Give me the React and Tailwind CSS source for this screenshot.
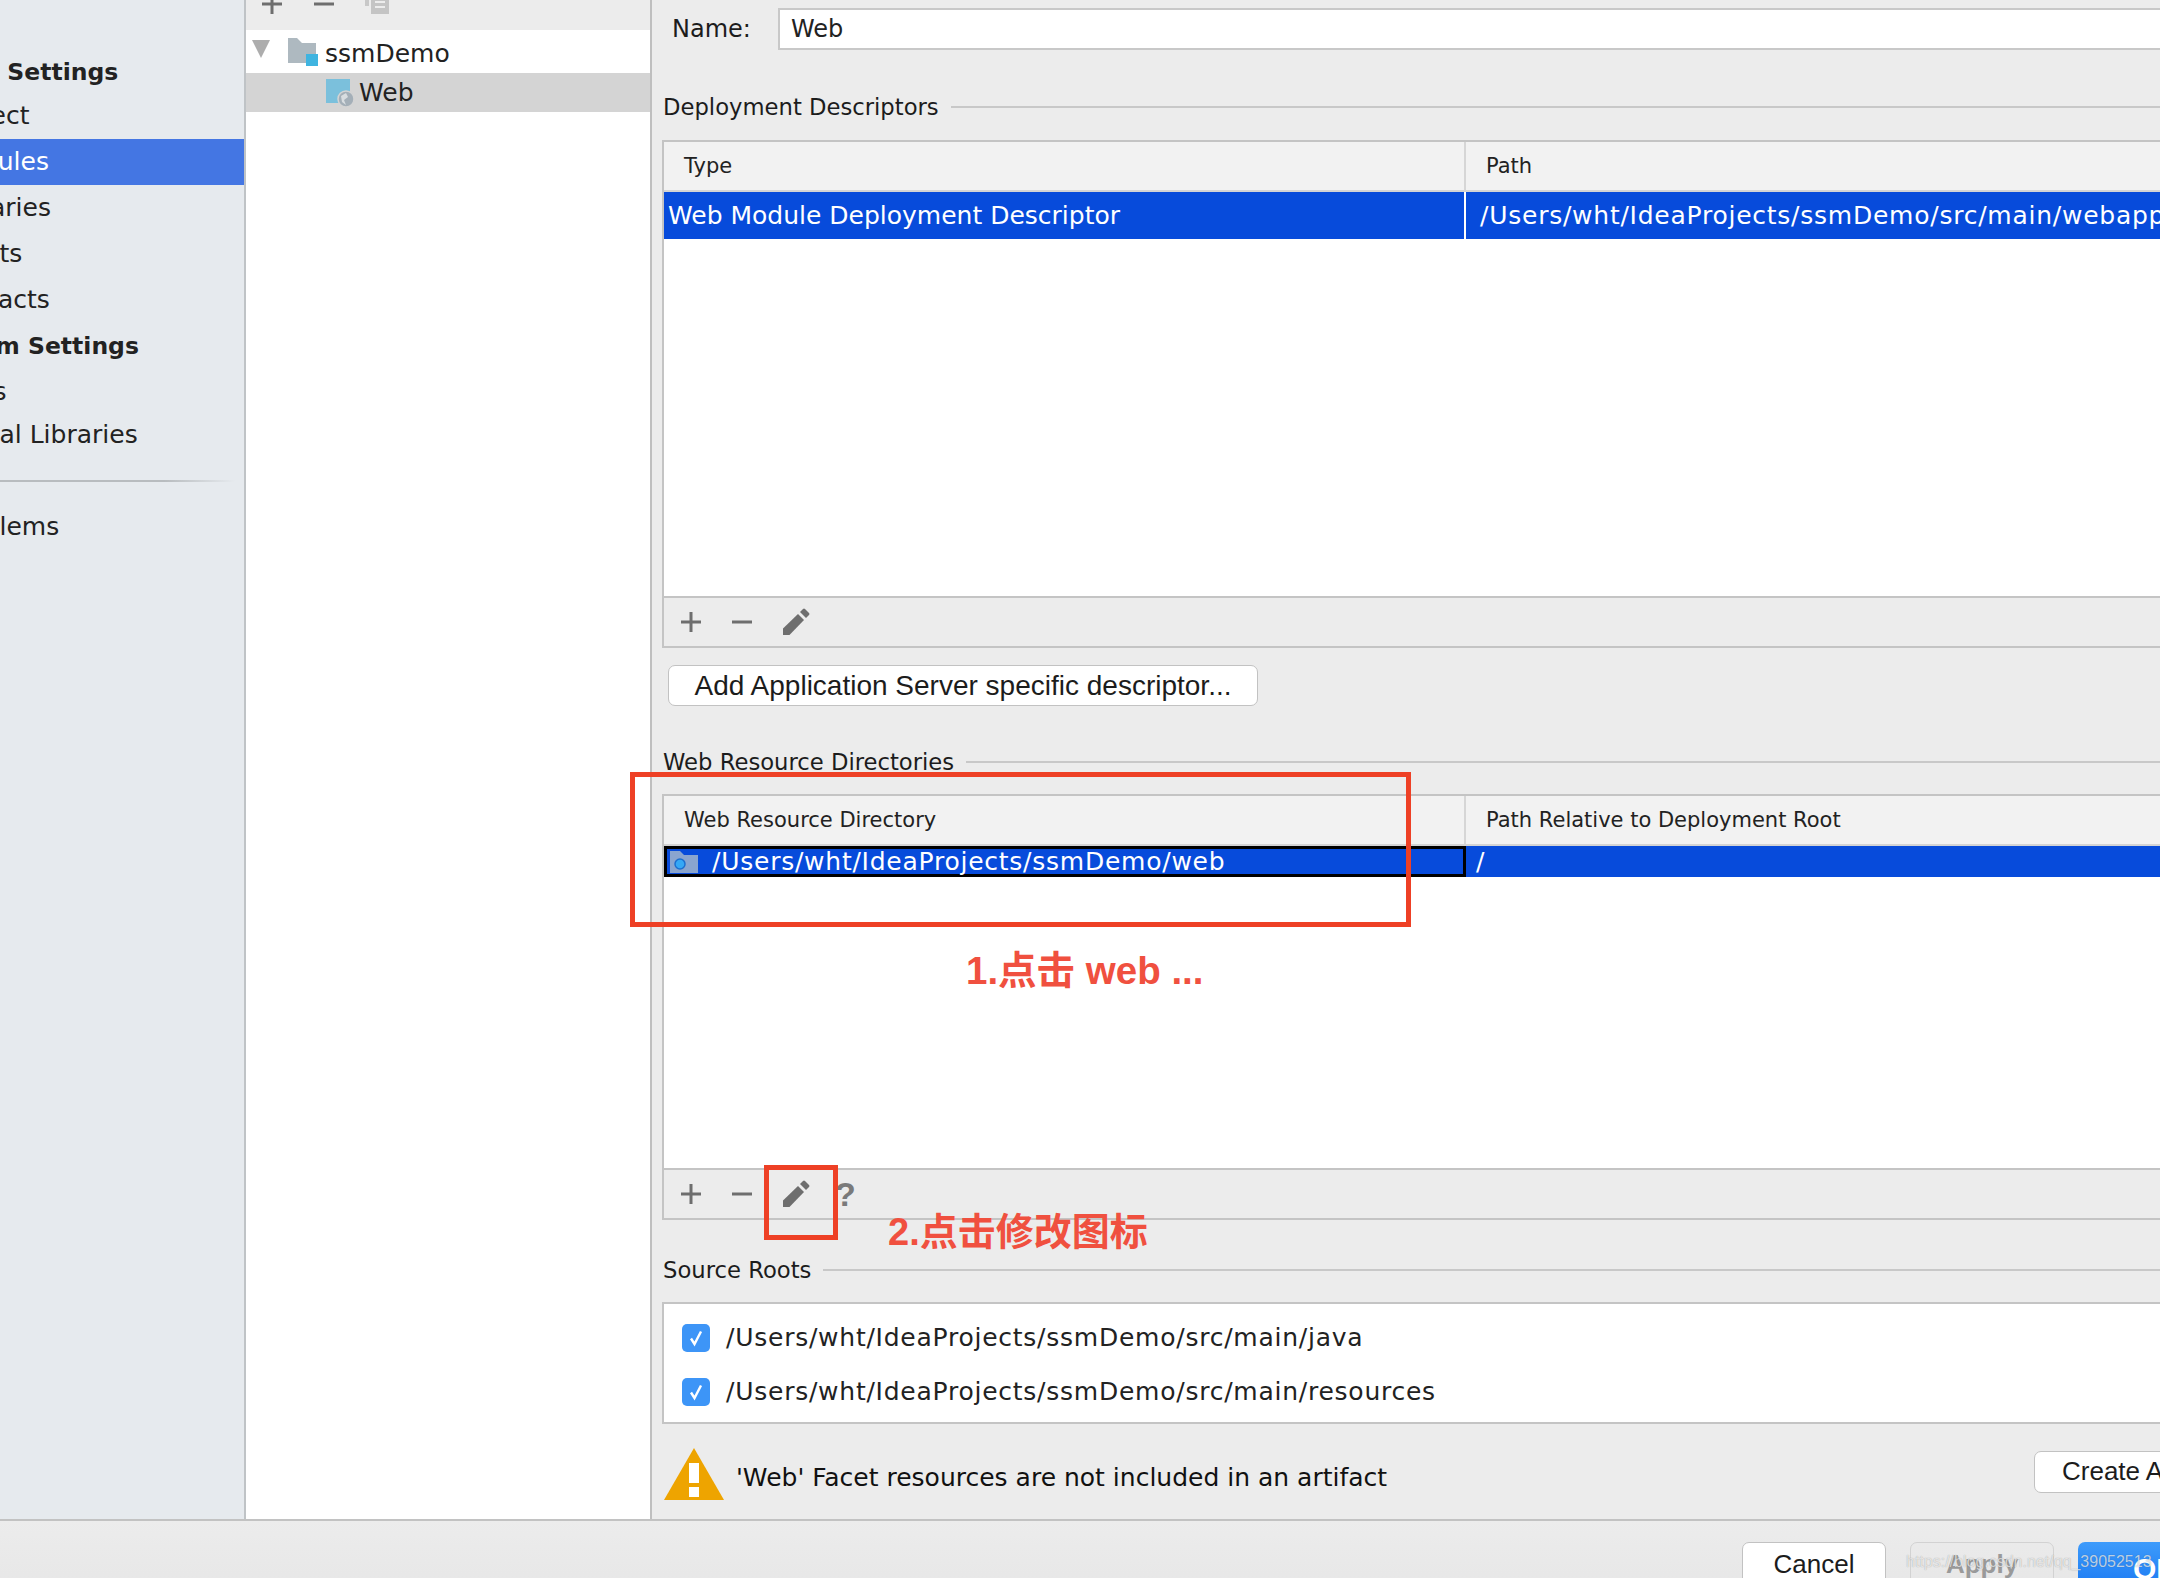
import { useState } from 'react';

const uiFont = "font-['DejaVu_Sans',sans-serif]";

const sidebarItems = [
    { label: 'Project Settings', h: 'h-[41px]', offset: 'ml-[-95px]', bold: true },
    { label: 'Project', h: 'h-[46px]', offset: 'ml-[-56px]' },
    { label: 'Modules', h: 'h-[46px]', offset: 'ml-[-55px]', active: true },
    { label: 'Libraries', h: 'h-[46px]', offset: 'ml-[-57px]' },
    { label: 'Facets', h: 'h-[46px]', offset: 'ml-[-57px]' },
    { label: 'Artifacts', h: 'h-[46px]', offset: 'ml-[-55px]' },
    { label: 'Platform Settings', h: 'h-[47px]', offset: 'ml-[-95px]', bold: true },
    { label: 'SDKs', h: 'h-[43px]', offset: 'ml-[-58px]' },
    { label: 'Global Libraries', h: 'h-[44px]', offset: 'ml-[-58px]' },
];

const PlusIcon = () => (
    <svg width="22" height="22" viewBox="0 0 22 22" className="text-[#6e6e6e]">
        <path d="M9.5 1h3v8.500h8.500v3h-8.500v8.500h-3v-8.500h-8.500v-3h8.500z" fill="currentColor" />
    </svg>
);

const MinusIcon = () => (
    <svg width="22" height="22" viewBox="0 0 22 22" className="text-[#6e6e6e]">
        <rect x="1" y="9.500" width="20" height="3" fill="currentColor" />
    </svg>
);

const PencilIcon = () => (
    <svg width="28" height="28" viewBox="0 0 28 28" className="text-[#6e6e6e]">
        <path d="M1 20.500 L16 6 L22 12 L7.500 27 L1 27 Z" fill="currentColor" />
        <path d="M18 4 L21 1 Q22 0 23 1 L27 5 Q28 6 27 7 L24 10 Z" fill="currentColor" />
    </svg>
);

const CopyIcon = () => (
    <svg width="24" height="24" viewBox="0 0 24 24">
        <rect x="0" y="0" width="4" height="14" fill="#c8c8c8" />
        <rect x="6" y="0" width="18" height="22" fill="#c4c4c4" />
        <path d="M10 5h10M10 10h10M10 15h10" stroke="#ececec" strokeWidth="2" />
    </svg>
);

const Heading = ({ title, className = '' }) => (
    <div className={`flex items-center gap-[12px] pl-[11px] h-[32px] ${className}`}>
        <span className="text-[22.7px] text-[#1c1c1c] whitespace-nowrap">{title}</span>
        <div className="flex-1 h-[2px] bg-[#c8c8c8]" />
    </div>
);

const TableHeader = ({ first, second }) => (
    <div className="flex h-[50px] bg-[#f2f2f2] border-b-2 border-[#d4d4d4] text-[21px] text-[#222]">
        <div className="w-[802px] shrink-0 pl-[20px] pt-[2px] flex items-center border-r-2 border-[#d6d6d6]">{first}</div>
        <div className="flex-1 pl-[20px] pt-[2px] flex items-center">{second}</div>
    </div>
);

const Toolbar = ({ help }) => (
    <div className="flex items-center h-[50px] bg-[#ececec] border-t-2 border-[#c4c4c4] pl-[16px]">
        <PlusIcon />
        <div className="ml-[29px]"><MinusIcon /></div>
        <div className="ml-[29px]"><PencilIcon /></div>
        {help && <span className="ml-[25px] text-[34px] font-bold leading-none text-[#7a7a7a] font-['Liberation_Sans',sans-serif]">?</span>}
    </div>
);

const MacButton = ({ children, className = '' }) => (
    <button className={`flex items-center justify-center rounded-[7px] border border-[#c2c2c2] bg-white text-[#1c1c1c] font-['Liberation_Sans',sans-serif] ${className}`}>
        {children}
    </button>
);

const SourceRoot = ({ path }) => (
    <div className="flex items-center h-[54px] pl-[18px] gap-[16px]">
        <div className="w-[28px] h-[28px] rounded-[5px] bg-[#3d95f7] flex items-center justify-center shrink-0">
            <svg width="18" height="18" viewBox="0 0 18 18" fill="none">
                <path d="M4 9.500 L7.500 15 L14 2.500" stroke="white" strokeWidth="2.400" />
            </svg>
        </div>
        <span className="text-[25px] tracking-[0.75px] text-[#222] whitespace-nowrap">{path}</span>
    </div>
);

const App = () => {
    const [name, setName] = useState('Web');

    return (
        <div className={`relative w-[2160px] h-[1578px] overflow-hidden flex flex-col bg-[#ececec] ${uiFont}`}>
            <div className="flex h-[1521px] border-b-2 border-[#c2c2c2] shrink-0">
                {/* settings sidebar, scrolled off to the left */}
                <div className="w-[246px] shrink-0 bg-[#e6eaee] border-r-2 border-[#bfc3c6] overflow-hidden pt-[52px]">
                    {sidebarItems.map((item) => (
                        <div
                            key={item.label}
                            className={`${item.h} flex items-center whitespace-nowrap ${item.active ? 'bg-[#4476e3] text-white' : 'text-[#222]'} ${item.bold ? 'font-bold text-[23.5px]' : 'text-[25px]'}`}
                        >
                            <span className={item.offset}>{item.label}</span>
                        </div>
                    ))}
                    <div className="mt-[23px] h-[2px] w-[235px] bg-gradient-to-r from-[#b8bcbf] from-70% to-transparent" />
                    <div className="mt-[22px] h-[46px] flex items-center whitespace-nowrap text-[25px] text-[#222]">
                        <span className="ml-[-56px]">Problems</span>
                    </div>
                </div>

                {/* module tree */}
                <div className="w-[406px] shrink-0 bg-white border-r-2 border-[#bfbfbf] flex flex-col">
                    <div className="h-[30px] bg-[#ececec] flex items-center pl-[15px] overflow-hidden">
                        <div className="flex items-center gap-[30px] mt-[-22px]">
                            <PlusIcon />
                            <MinusIcon />
                            <CopyIcon />
                        </div>
                    </div>
                    <div className="h-[43px] flex items-center pl-[6px]">
                        <svg width="18" height="18" viewBox="0 0 18 18" className="mb-[6px]">
                            <path d="M0 0 H18 L9 18 Z" fill="#adadad" />
                        </svg>
                        <svg width="30" height="28" viewBox="0 0 30 28" className="ml-[18px]">
                            <path d="M0 0 H9 L14 5 H28 V25 H0 Z" fill="#aeb9c0" />
                            <rect x="18" y="16" width="12" height="12" fill="#3fb4e0" />
                        </svg>
                        <span className="ml-[7px] mt-[4px] text-[25px] text-[#222]">ssmDemo</span>
                    </div>
                    <div className="h-[39px] bg-[#d4d4d4] flex items-center pl-[80px]">
                        <svg width="30" height="28" viewBox="0 0 30 28">
                            <rect x="0" y="0" width="24" height="24" fill="#7bc0dc" />
                            <circle cx="20" cy="20" r="8" fill="#a4afb8" stroke="#d4d4d4" strokeWidth="1.500" />
                            <path d="M15 17 L20 14 L22 18 L18 21 L20 26 L16 23 Z" fill="#d8dde0" />
                        </svg>
                        <span className="ml-[3px] text-[25px] text-[#222]">Web</span>
                    </div>
                </div>

                {/* facet form */}
                <div className="flex-1 min-w-0 overflow-hidden">
                    <div className="flex items-center pt-[8px] pl-[20px]">
                        <span className="w-[106px] text-[24px] text-[#1c1c1c]">Name:</span>
                        <input
                            value={name}
                            onChange={(e) => setName(e.target.value)}
                            className="flex-1 h-[42px] bg-white border-2 border-[#c8c8c8] border-r-0 pl-[11px] text-[24px] text-[#222] outline-none"
                        />
                    </div>

                    <Heading title="Deployment Descriptors" className="mt-[41px]" />
                    <div className="ml-[10px] mt-[17px] border-2 border-r-0 border-[#c4c4c4] bg-white">
                        <TableHeader first="Type" second="Path" />
                        <div className="flex h-[47px] bg-[#074bdb] text-white text-[25px] whitespace-nowrap">
                            <div className="w-[802px] shrink-0 pl-[4px] flex items-center border-r-2 border-white">Web Module Deployment Descriptor</div>
                            <div className="flex-1 pl-[14px] flex items-center tracking-[0.75px]">/Users/wht/IdeaProjects/ssmDemo/src/main/webapp/WEB-INF/web.xml</div>
                        </div>
                        <div className="h-[357px]" />
                        <Toolbar />
                    </div>
                    <MacButton className="ml-[16px] mt-[17px] w-[590px] h-[41px] text-[28px]">Add Application Server specific descriptor...</MacButton>

                    <Heading title="Web Resource Directories" className="mt-[40px]" />
                    <div className="ml-[10px] mt-[16px] border-2 border-r-0 border-[#c4c4c4] bg-white">
                        <TableHeader first="Web Resource Directory" second="Path Relative to Deployment Root" />
                        <div className="flex h-[31px] text-white text-[25px] whitespace-nowrap">
                            <div className="w-[802px] shrink-0 bg-[#074bdb] border-[3px] border-black flex items-center pl-[3px]">
                                <svg width="28" height="22" viewBox="0 0 28 22">
                                    <path d="M0 0 H10 L14 4 H28 V22 H0 Z" fill="#8aa5cf" />
                                    <circle cx="10" cy="13" r="5" fill="#35a8f5" stroke="#1c6fd0" strokeWidth="1.500" />
                                </svg>
                                <span className="ml-[14px] tracking-[0.75px]">/Users/wht/IdeaProjects/ssmDemo/web</span>
                            </div>
                            <div className="flex-1 bg-[#074bdb] pl-[10px] flex items-center">/</div>
                        </div>
                        <div className="h-[291px]" />
                        <Toolbar help />
                    </div>

                    <Heading title="Source Roots" className="mt-[34px]" />
                    <div className="ml-[10px] mt-[16px] h-[122px] border-2 border-r-0 border-[#c4c4c4] bg-white pt-[7px]">
                        <SourceRoot path="/Users/wht/IdeaProjects/ssmDemo/src/main/java" />
                        <SourceRoot path="/Users/wht/IdeaProjects/ssmDemo/src/main/resources" />
                    </div>

                    <div className="flex items-center ml-[12px] mt-[24px] h-[52px]">
                        <svg width="60" height="52" viewBox="0 0 60 52" className="shrink-0">
                            <path d="M30 0 L60 52 H0 Z" fill="#eea400" />
                            <rect x="25" y="15" width="10" height="20" fill="white" />
                            <rect x="25" y="39" width="10" height="10" fill="white" />
                        </svg>
                        <span className="ml-[12px] mt-[7px] text-[25px] text-[#111] whitespace-nowrap">'Web' Facet resources are not included in an artifact</span>
                        <MacButton className="ml-auto mr-[-60px] mb-[5px] w-[186px] h-[42px] text-[26px] justify-start pl-[27px] shrink-0 whitespace-nowrap">Create Artifact</MacButton>
                    </div>
                </div>
            </div>

            {/* dialog buttons */}
            <div className="flex-1 flex pl-[1742px] pt-[21px] gap-[24px] bg-gradient-to-b from-[#ececec] to-[#e6e6e6]">
                <MacButton className="w-[144px] h-[60px] text-[26px] items-start pt-[2px] shrink-0">Cancel</MacButton>
                <MacButton className="w-[144px] h-[60px] text-[26px] font-bold items-start pt-[2px] shrink-0 !bg-transparent !text-[#9a9a9a] !border-[#d2d2d2]">Apply</MacButton>
                <button className="flex items-start w-[120px] h-[60px] shrink-0 rounded-[7px] bg-gradient-to-b from-[#3d9bfb] to-[#0f6ff0] text-white text-[30px] font-bold pl-[55px] pt-[4px] whitespace-nowrap font-['Liberation_Sans',sans-serif]">OK</button>
            </div>

            {/* screenshot annotations */}
            <div className="absolute left-[630px] top-[772px] w-[781px] h-[155px] border-[5px] border-[#ee4025]" />
            <div className="absolute left-[764px] top-[1165px] w-[74px] h-[75px] border-[5px] border-[#ee4025]" />
            <div className="absolute left-[966px] top-[942px] text-[38.5px] font-bold text-[#f0503f] whitespace-nowrap font-['Liberation_Sans','Noto_Sans_CJK_SC',sans-serif]">1.点击 web ...</div>
            <div className="absolute left-[888px] top-[1204px] text-[38px] font-bold text-[#f0503f] whitespace-nowrap font-['Liberation_Sans','Noto_Sans_CJK_SC',sans-serif]">2.点击修改图标</div>
            <div className="absolute left-[1906px] top-[1550px] text-[16px] text-white/70 whitespace-nowrap font-['Liberation_Sans',sans-serif] [text-shadow:0_0_1px_rgba(0,0,0,0.35)]">https://blog.csdn.net/qq_39052513</div>
        </div>
    );
};

export default App;
